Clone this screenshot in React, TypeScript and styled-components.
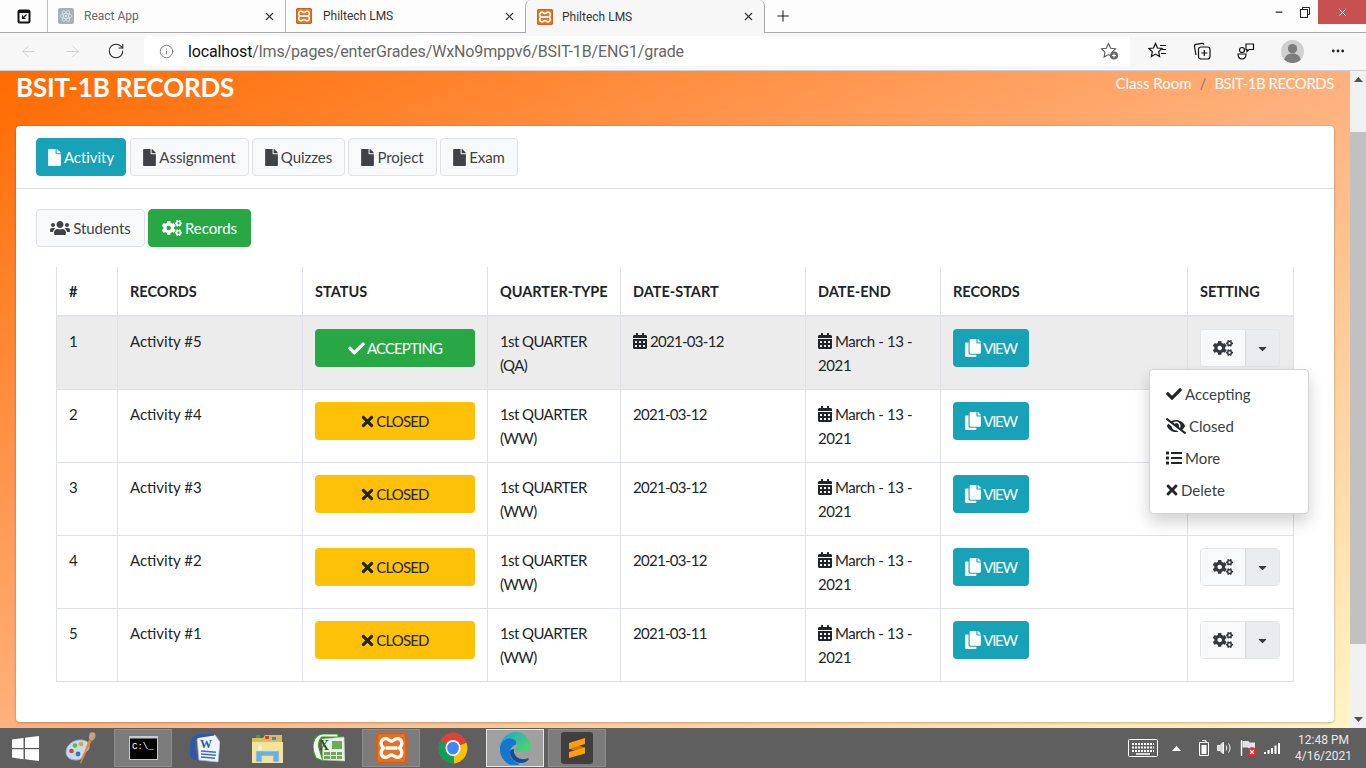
import * as React from 'react'
import styled, { createGlobalStyle } from 'styled-components'
import { ArrowLeft, ArrowRight, Info, Minus, MoreHorizontal, Plus, RotateCw, X } from 'lucide-react'
import {
  FaCalendarAlt,
  FaCaretDown,
  FaCheck,
  FaCogs,
  FaCopy,
  FaEyeSlash,
  FaFile,
  FaList,
  FaTimes,
  FaUsers
} from 'react-icons/fa'

// ______________________________________________________
//
// @ Data

type Row = { no: number; name: string; accepting: boolean; quarter: string; start: string; startIcon: boolean }

const rows: Row[] = [
  { no: 1, name: 'Activity #5', accepting: true, quarter: '(QA)', start: '2021-03-12', startIcon: true },
  { no: 2, name: 'Activity #4', accepting: false, quarter: '(WW)', start: '2021-03-12', startIcon: false },
  { no: 3, name: 'Activity #3', accepting: false, quarter: '(WW)', start: '2021-03-12', startIcon: false },
  { no: 4, name: 'Activity #2', accepting: false, quarter: '(WW)', start: '2021-03-12', startIcon: false },
  { no: 5, name: 'Activity #1', accepting: false, quarter: '(WW)', start: '2021-03-11', startIcon: false }
]

const columns = [61, 185, 185, 133, 185, 135, 247, 106]
const headers = ['#', 'RECORDS', 'STATUS', 'QUARTER-TYPE', 'DATE-START', 'DATE-END', 'RECORDS', 'SETTING']
const tabs = ['Activity', 'Assignment', 'Quizzes', 'Project', 'Exam']
const tabWidths = [90, 119, 93, 89, 78]

// ______________________________________________________
//
// @ Styled: browser

const Global = createGlobalStyle`
  html, body { margin: 0; padding: 0; height: 100%; overflow: hidden; }
  body { font-family: "Lato", "Liberation Sans", sans-serif; color: #212529; }
  * { box-sizing: border-box; }
`

const Screen = styled.div`
  display: flex;
  flex-direction: column;
  width: 1366px;
  height: 768px;
  overflow: hidden;
`

const TabStrip = styled.div`
  display: flex;
  height: 33px;
  background: #fdfdfd;
  border-bottom: 1px solid #a9a9a9;
  flex: none;
`

const StripAction = styled.div`
  display: flex;
  align-items: center;
  justify-content: center;
  width: 47px;
  height: 32px;
`

const BrowserTab = styled.div<{ $active?: boolean; $width: number }>`
  display: flex;
  align-items: center;
  width: ${p => p.$width}px;
  height: ${p => (p.$active ? 33 : 32)}px;
  padding: 0 9px 0 ${p => (p.$active ? 11 : 10)}px;
  font: 12px "Roboto", "Noto Sans", sans-serif;
  color: #333;
  border-left: 1px solid ${p => (p.$active ? '#a9a9a9' : '#bdbdbd')};
  border-right: ${p => (p.$active ? '1px solid #a9a9a9' : 'none')};
  border-radius: ${p => (p.$active ? '6px 6px 0 0' : '0')};
  background: ${p => (p.$active ? '#f7f7f7' : 'transparent')};
  svg { flex: none; }
`

const TabTitle = styled.span<{ $muted?: boolean; $shift: number }>`
  flex: 1;
  margin-left: ${p => p.$shift}px;
  color: ${p => (p.$muted ? '#666' : '#333')};
`

const NewTab = styled.div`
  display: flex;
  align-items: center;
  width: 36px;
  padding-left: 9px;
  height: 32px;
`

const WindowControls = styled.div`
  display: flex;
  margin-left: auto;
  height: 24px;
`

const WindowButton = styled.div<{ $close?: boolean; $width: number }>`
  display: flex;
  align-items: center;
  justify-content: center;
  width: ${p => p.$width}px;
  background: ${p => (p.$close ? '#c75050' : 'transparent')};
  color: ${p => (p.$close ? '#fff' : '#222')};
`

const AddressRow = styled.div`
  display: flex;
  align-items: center;
  height: 38px;
  flex: none;
  padding-bottom: 1px;
  background: #f7f7f7;
  border-bottom: 1px solid #d0d0d0;
`

const NavIcon = styled.div<{ $width: number }>`
  display: flex;
  align-items: center;
  justify-content: center;
  width: ${p => p.$width}px;
  flex: none;
  color: #222;
`

const AddressBar = styled.div`
  display: flex;
  align-items: center;
  width: 986px;
  height: 30px;
  padding: 0 10px 0 15px;
  background: #fff;
  border-radius: 4px;
  font: 16px "Roboto", "Noto Sans", sans-serif;
  letter-spacing: -0.13px;
  color: #666;
  span { margin-left: 14px; flex: 1; white-space: nowrap; }
  b { font-weight: 400; color: #111; }
`

// ______________________________________________________
//
// @ Styled: page

const Viewport = styled.div`
  display: flex;
  flex: 1;
  min-height: 0;
`

const Page = styled.div`
  flex: 1;
  padding: 0 16px;
  overflow: hidden;
  background: linear-gradient(to bottom right, #ff6a00 0%, #ffb07c 50%, #fff6c4 100%);
`

const PageHead = styled.div`
  display: flex;
  justify-content: space-between;
  align-items: flex-start;
  height: 55px;
`

const Title = styled.h1`
  margin: 0;
  font-size: 26px;
  line-height: 32px;
  font-weight: 700;
  letter-spacing: -0.2px;
  color: #fff;
`

const Crumbs = styled.div`
  display: flex;
  gap: 8px;
  font-size: 15px;
  line-height: 24px;
  color: #fff;
  i { font-style: normal; color: #7d7d7d; }
`

const CrumbCurrent = styled.span`
  letter-spacing: -0.45px;
`

const Card = styled.div`
  background: #fff;
  border-radius: 4px;
  height: 596px;
  box-shadow: 0 0 2px rgba(0, 0, 0, 0.15), 0 1px 3px rgba(0, 0, 0, 0.2);
`

const CardHead = styled.div`
  display: flex;
  gap: 3px;
  height: 63px;
  padding: 12px 20px;
  border-bottom: 1px solid #dfdfdf;
  > :first-child { margin-right: 1px; }
`

const CardBody = styled.div`
  padding: 20px;
`

const ButtonRow = styled.div`
  display: flex;
  gap: 3px;
  margin-bottom: 20px;
`

const Button = styled.div<{ $kind: 'info' | 'success' | 'light'; $width: number }>`
  display: flex;
  align-items: center;
  justify-content: center;
  gap: 3px;
  width: ${p => p.$width}px;
  height: 38px;
  border-radius: 4px;
  font-size: 15px;
  letter-spacing: -0.05px;
  border: 1px solid ${p => ({ info: '#17a2b8', success: '#28a745', light: '#dfe1e4' })[p.$kind]};
  background: ${p => ({ info: '#17a2b8', success: '#28a745', light: '#f8f9fa' })[p.$kind]};
  color: ${p => (p.$kind === 'light' ? '#3f4347' : '#fff')};
  svg { flex: none; }
`

const FileIcon = styled(FaFile)`
  margin: 0 -2px;
`

const Table = styled.table`
  table-layout: fixed;
  width: 1237px;
  margin-left: 20px;
  border-collapse: collapse;
`

const Th = styled.th`
  height: 49px;
  padding: 13px 12px 11px;
  text-align: left;
  vertical-align: middle;
  font-size: 14.5px;
  line-height: 24px;
  font-weight: 700;
  white-space: nowrap;
  color: #212529;
  border-left: 1px solid #dee2e6;
  border-right: 1px solid #dee2e6;
  border-bottom: 2px solid #dee2e6;
`

const Tr = styled.tr<{ $hover: boolean }>`
  background: ${p => (p.$hover ? '#ececec' : 'transparent')};
`

const Td = styled.td`
  position: relative;
  height: 73px;
  padding: 12px;
  vertical-align: top;
  font-size: 15px;
  line-height: 24px;
  color: #212529;
  border: 1px solid #dee2e6;
`

const Tight = styled.span<{ $spacing: number }>`
  letter-spacing: ${p => p.$spacing}px;
`

const CalendarIcon = styled(FaCalendarAlt)`
  vertical-align: -2px;
  margin: 0 2px 0 -1px;
`

const StatusButton = styled.div<{ $accepting: boolean }>`
  display: flex;
  align-items: center;
  justify-content: center;
  gap: 2px;
  width: 160px;
  height: 38px;
  border-radius: 4px;
  font-size: 15px;
  letter-spacing: -0.85px;
  background: ${p => (p.$accepting ? '#28a745' : '#ffc107')};
  color: ${p => (p.$accepting ? '#fff' : '#212529')};
`

const TimesIcon = styled(FaTimes)`
  margin: 0 -2px;
`

const ViewButton = styled.div`
  display: flex;
  align-items: center;
  justify-content: center;
  gap: 2px;
  width: 76px;
  height: 38px;
  border-radius: 4px;
  font-size: 15px;
  letter-spacing: -1.3px;
  background: #17a2b8;
  color: #fff;
`

const CopyIcon = styled(FaCopy)`
  margin: 0 -1px;
`

const SettingGroup = styled.div`
  display: flex;
  width: 80px;
  height: 38px;
  border: 1px solid #e2e4e7;
  border-radius: 4px;
  overflow: hidden;
  color: #343a40;
`

const SettingPart = styled.div<{ $toggle?: boolean }>`
  display: flex;
  align-items: center;
  justify-content: center;
  flex: ${p => (p.$toggle ? '0 0 34px' : '1')};
  background: ${p => (p.$toggle ? '#e9ecef' : '#f8f9fa')};
  border-left: ${p => (p.$toggle ? '1px solid #d8dbdf' : 'none')};
`

const Menu = styled.div`
  position: absolute;
  z-index: 2;
  top: 52px;
  left: -39px;
  width: 160px;
  height: 145px;
  padding: 8px 0;
  background: #fff;
  border: 1px solid #d2d4d7;
  border-radius: 4px;
  box-shadow: 0 8px 16px rgba(0, 0, 0, 0.18);
`

const MenuItem = styled.div`
  display: flex;
  align-items: center;
  gap: 3px;
  height: 32px;
  padding: 0 16px;
  font-size: 15px;
  color: #3a3f44;
  svg { flex: none; color: #212529; }
`

const Scrollbar = styled.div`
  display: flex;
  flex-direction: column;
  align-items: center;
  width: 16px;
  flex: none;
  background: #f1f1f1;
`

const ScrollArrow = styled.div`
  display: flex;
  align-items: center;
  justify-content: center;
  width: 16px;
  height: 17px;
  flex: none;
`

const ScrollTrack = styled.div`
  flex: 1;
  width: 100%;
  padding-top: 44px;
  padding-bottom: 67px;
  &::before {
    content: '';
    display: block;
    height: 100%;
    background: #c1c1c1;
  }
`

// ______________________________________________________
//
// @ Styled: taskbar

const Taskbar = styled.div`
  display: flex;
  align-items: center;
  height: 40px;
  flex: none;
  background: #5f5f5f;
`

const Start = styled.div`
  display: flex;
  align-items: center;
  justify-content: center;
  width: 50px;
  padding-left: 1px;
`

const Slot = styled.div<{ $state?: 'open' | 'active' }>`
  display: flex;
  align-items: center;
  justify-content: center;
  width: 58px;
  height: 38px;
  margin: 0 2px;
  border: 1px solid ${p => (p.$state === 'active' ? '#e6e6e6' : p.$state === 'open' ? '#8d8d8d' : 'transparent')};
  background: ${p => (p.$state === 'active' ? '#a0a0a0' : p.$state === 'open' ? '#7b7b7b' : 'transparent')};
`

const Tray = styled.div`
  display: flex;
  align-items: center;
  margin-left: auto;
  height: 100%;
`

const TrayIcon = styled.div<{ $width: number }>`
  display: flex;
  align-items: center;
  justify-content: center;
  width: ${p => p.$width}px;
`

const Clock = styled.div`
  width: 85px;
  text-align: center;
  font: 12px/16px "Roboto", "Liberation Sans", sans-serif;
  color: #e8e8e8;
`

// ______________________________________________________
//
// @ Drawings

const Xampp: React.FC<{ width: number; height: number }> = ({ width, height }) => (
  <svg width={width} height={height} viewBox="0 0 16 16">
    <rect width="16" height="16" rx="1.800" fill="#e8701f" />
    <rect x=".5" y=".5" width="15" height="15" rx="1.500" fill="none" stroke="#c85a12" strokeWidth=".6" />
    <path
      d="M5 3.200c1.500 0 2 1.300 3 1.300s1.500-1.300 3-1.300c2.600 0 3.200 3.200 1 4.800 2.200 1.600 1.600 4.800-1 4.800-1.500 0-2-1.300-3-1.300s-1.500 1.300-3 1.300c-2.600 0-3.200-3.200-1-4.800-2.200-1.600-1.600-4.800 1-4.800Z"
      fill="none"
      stroke="#fff"
      strokeWidth="1.700"
    />
    <rect x="5" y="7.100" width="6" height="1.800" fill="#fff" />
  </svg>
)

const ReactFavicon = () => (
  <svg width="16" height="16" viewBox="0 0 16 16">
    <rect width="16" height="16" rx="2" fill="#a9b0b3" />
    <g fill="none" stroke="#d7e6ea" strokeWidth="0.800">
      <ellipse cx="8" cy="8" rx="6" ry="2.400" />
      <ellipse cx="8" cy="8" rx="6" ry="2.400" transform="rotate(60 8 8)" />
      <ellipse cx="8" cy="8" rx="6" ry="2.400" transform="rotate(120 8 8)" />
    </g>
    <circle cx="8" cy="8" r="1.200" fill="#d7e6ea" />
  </svg>
)

const TabActions = () => (
  <svg width="16" height="16" viewBox="0 0 16 16">
    <rect x="1.500" y="1.500" width="13" height="14" rx="2" fill="#111" />
    <rect x="3.500" y="5" width="9" height="8.500" fill="#fff" />
    <path d="M10.500 6.500 6.500 10.500M6.500 7.500v3h3" fill="none" stroke="#111" strokeWidth="1.200" />
  </svg>
)

const AddFavourite = () => (
  <svg width="20" height="20" viewBox="0 0 20 20">
    <path d="M8.500 2.500 10.700 7.200 15.500 7.800 12 11.200 12.900 16 8.500 13.600 4.100 16 5 11.200 1.500 7.800 6.300 7.200Z" fill="none" stroke="#555" strokeWidth="1.100" />
    <circle cx="14" cy="14.500" r="4" fill="#666" />
    <path d="M14 12.500v4M12 14.500h4" stroke="#fff" strokeWidth="1.100" />
  </svg>
)

const Favourites = () => (
  <svg width="20" height="20" viewBox="0 0 20 20">
    <path d="M7.500 2.500 9.500 7 14 7.500 10.700 10.600 11.600 15.500 7.500 13.100 3.400 15.500 4.300 10.600 1 7.500 5.500 7Z" fill="none" stroke="#111" strokeWidth="1.200" />
    <path d="M12 4.500h6M14 8.500h4M13 12.500h5" stroke="#111" strokeWidth="1.200" />
  </svg>
)

const Collections = () => (
  <svg width="20" height="20" viewBox="0 0 20 20" fill="none" stroke="#111" strokeWidth="1.200">
    <path d="M4 14 2.500 5.500c-.2-1.200.4-2 1.500-2.200l6-1c1-.1 1.700.3 2 1.200" />
    <rect x="6.500" y="6" width="11.500" height="12" rx="2.500" fill="#f7f7f7" />
    <path d="M12.300 9v6M9.300 12h6" />
  </svg>
)

const Feedback = () => (
  <svg width="20" height="20" viewBox="0 0 20 20" fill="none" stroke="#111" strokeWidth="1.200">
    <circle cx="6" cy="9" r="2.500" />
    <path d="M2 13h8c0 3-1.500 5-4 5s-4-2-4-5Z" />
    <path d="M10 3h7.500v5.500H13l-2 2V8.500h-1Z" />
  </svg>
)

const Avatar = () => (
  <svg width="23" height="23" viewBox="0 0 24 24">
    <circle cx="12" cy="12" r="12" fill="#cfcfcf" />
    <circle cx="12" cy="9" r="4.800" fill="#7d7d7d" />
    <path d="M3.500 20.500c1-5 4.500-6.500 8.500-6.500s7.500 1.500 8.500 6.500A12 12 0 0 1 3.500 20.500Z" fill="#7d7d7d" />
  </svg>
)

const WindowsLogo = () => (
  <svg width="27" height="25" viewBox="0 0 27 25" fill="#fff">
    <path d="M0 3.600 11.500 2v10H0ZM13 1.800 27 0v12H13ZM0 13.200h11.500v10L0 21.600ZM13 13.200h14V25l-14-1.800Z" />
  </svg>
)

const Paint = () => (
  <svg width="32" height="32" viewBox="0 0 32 32">
    <path d="M1 20C1 13 9 7 17 8c6 .7 8 4 7 8-1 4-5 4-6 7-1 3-2 5-7 5-6 0-10-3-10-8Z" fill="#c6dbee" stroke="#8fb2d2" />
    <circle cx="6.500" cy="19" r="2.300" fill="#d3452f" />
    <circle cx="10" cy="13.500" r="2.300" fill="#6eb33f" />
    <circle cx="16" cy="12" r="2.300" fill="#e3a72b" />
    <circle cx="13" cy="22" r="2.400" fill="#3f74a8" />
    <path d="M24 7.500 26.500 9 16 31.500l-1-.6Z" fill="#e98a24" />
    <path d="M25 1c3-1.500 6-.5 5.500 3-.3 2-2 4-3.500 5l-3-2c0-2 0-4 1-6Z" fill="#c9a27a" />
  </svg>
)

const Terminal = () => (
  <svg width="29" height="24" viewBox="0 0 29 24">
    <rect width="29" height="24" fill="#c9c9c9" />
    <rect x="1" y="2.500" width="27" height="20.500" fill="#000" />
    <text x="3" y="13" fontFamily="Liberation Mono, monospace" fontSize="9" fill="#fff">C:\_</text>
  </svg>
)

const Word = () => (
  <svg width="30" height="29" viewBox="0 0 30 29">
    <path d="M7 3 25 1l5 7-2 20-19-2Z" fill="#f1f5fb" stroke="#a9bcd6" strokeWidth=".8" />
    <path d="M8 0h16v1.500L8 4C5 6 5 10 5 14l3 13-7-3C0 18-1 12 1 7c1-4 4-6 7-7Z" fill="#2a5ba8" />
    <text x="10" y="14" fontFamily="Liberation Serif, serif" fontWeight="700" fontSize="12" fill="#2a5ba8">W</text>
    <path d="M11 17l15 1.200M11 20l15 1.200M11 23l14 1.200" stroke="#3e70b8" strokeWidth="1.500" />
  </svg>
)

const Explorer = () => (
  <svg width="31" height="29" viewBox="0 0 31 29">
    <path d="M0 4h11l2-3h17v28H0Z" fill="#d9bb62" />
    <rect x="4" y="1" width="4" height="3" fill="#3aa33a" />
    <rect x="13" y="2" width="4" height="3" fill="#d8402a" />
    <rect x="20" y="3" width="4" height="3" fill="#2f8fd0" />
    <path d="M0 8h31v21H0Z" fill="#f5e39a" />
    <path d="M4 28V17h23v11h-6v-6H10v6Z" fill="#6faedb" stroke="#b7dcf3" strokeWidth=".7" />
    <circle cx="8" cy="14" r="2" fill="#fff" opacity=".9" />
  </svg>
)

const Excel = () => (
  <svg width="32" height="29" viewBox="0 0 32 29">
    <path d="M10 0h15v3H9C6 6 5 10 6 14l4 13-7-3C0 18-1 12 1 7c1-4 5-7 9-7Z" fill="#f1f7ec" stroke="#3f9a32" strokeWidth="1.200" />
    <path d="M9 5 31 3l1 24-22-1Z" fill="#e9f1e3" stroke="#b5c9ac" strokeWidth=".6" />
    <text x="6" y="16" fontFamily="Liberation Serif, serif" fontWeight="700" fontSize="14" fill="#1f5a26">X</text>
    <path d="M19 7h10v8H19ZM11 18h6v3h-6ZM18 18h5v3h-5ZM24 18h5v3h-5ZM11 22h6v3h-6ZM18 22h5v3h-5ZM24 22h5v3h-5Z" fill="#6fa75c" />
  </svg>
)

const Chrome = () => (
  <svg width="30" height="32" viewBox="0 0 32 34">
    <ellipse cx="16" cy="17" rx="15.500" ry="16.500" fill="#db4437" />
    <path d="M16 17 30.500 11.500A15.500 16.500 0 0 1 17 33.500Z" fill="#f4c20d" />
    <path d="M16 17 17 33.500A15.500 16.500 0 0 1 2.500 9Z" fill="#0f9d58" />
    <ellipse cx="16" cy="17" rx="8" ry="8.500" fill="#fff" />
    <ellipse cx="16" cy="17" rx="6.300" ry="6.800" fill="#4285f4" />
  </svg>
)

const Edge = () => (
  <svg width="31" height="33" viewBox="0 0 31 33">
    <defs>
      <linearGradient id="edgeTop" x1="0" y1="0" x2="1" y2="0.600">
        <stop offset="0" stopColor="#1f9fd8" />
        <stop offset="1" stopColor="#4bd26e" />
      </linearGradient>
    </defs>
    <path d="M0 15C1 6 8 0 16 0c8 0 15 7 15 15 0 3-2 5-5 5H15c-1.500 0-1-2 .5-3 2-1.500 2.500-3 1.500-5C15 8 9 6 5 9c-2.500 2-4 4-5 6Z" fill="url(#edgeTop)" />
    <path d="M0 15c1-5 5-9 10-8.500 5 .5 7 3 6 6-3 1-6 3.500-6 8 0 5 4 10 10 11.500-2 1-4 1.500-6 1.500C6 33-1 25 0 15Z" fill="#1277cf" />
    <path d="M10 20c0 6 5 11 11 11 3.500 0 6-1.500 8-4l-1-.8c-4 1.800-9 1-12-2-2-2-2.500-4.700-2-7.200-2 0-4 1-4 3Z" fill="#0c4f9e" />
  </svg>
)

const Sublime = () => (
  <svg width="32" height="32" viewBox="0 0 32 32">
    <rect width="32" height="32" rx="3" fill="#3f3f3f" />
    <path d="M8 11 24 15.500v6L8 17Z" fill="#c57a0b" />
    <path d="M24 6v6L8 17v-6ZM24 15.500v6L8 26v-6Z" fill="#ff9d0a" />
  </svg>
)

const Keyboard = () => (
  <svg width="30" height="18" viewBox="0 0 30 18">
    <rect x=".5" y=".5" width="29" height="17" rx="1" fill="#5f5f5f" stroke="#fff" />
    <path d="M4 5h22M4 8.500h22M4 12h22" stroke="#fff" strokeWidth="2" strokeDasharray="2 1" />
    <path d="M8 15h14" stroke="#fff" strokeWidth="1.500" />
  </svg>
)

const TrayCaret = () => (
  <svg width="9" height="5" viewBox="0 0 9 5"><path d="M4.500 0 9 5H0Z" fill="#fff" /></svg>
)

const Battery = () => (
  <svg width="10" height="16" viewBox="0 0 10 16" fill="none" stroke="#fff">
    <path d="M3 .5h4v2M.5 2.500h9v13h-9Z" />
    <rect x="2.500" y="5" width="5" height="9" fill="#fff" stroke="none" />
  </svg>
)

const Speaker = () => (
  <svg width="15" height="14" viewBox="0 0 15 14" fill="none" stroke="#fff">
    <path d="M.5 4.500H3L6.500 1v12L3 9.500H.5Z" fill="#d8d8d8" />
    <path d="M9 4.500c1 1.500 1 3.500 0 5M11.500 2.500c2 3 2 6 0 9" />
  </svg>
)

const Flag = () => (
  <svg width="18" height="19" viewBox="0 0 18 19">
    <path d="M1.500 1v16" stroke="#fff" strokeWidth="1.400" />
    <path d="M2.500 2h6l1 1.500H15V10H9L8 8.500H2.500Z" fill="#e4e4e4" />
    <circle cx="12" cy="13" r="4.800" fill="#e0262a" />
    <path d="M10 11l4 4M14 11l-4 4" stroke="#fff" strokeWidth="1.300" />
  </svg>
)

const Signal = () => (
  <svg width="16" height="11" viewBox="0 0 16 11" fill="#fff">
    <rect x="0" y="9" width="2" height="2" />
    <rect x="3.500" y="7" width="2" height="4" />
    <rect x="7" y="5" width="2" height="6" />
    <rect x="10.500" y="2.500" width="2" height="8.500" />
    <rect x="14" y="0" width="2" height="11" />
  </svg>
)

// ______________________________________________________
//
// @ View

const App: React.FC = () => (
  <Screen>
    <Global />
    <TabStrip>
      <StripAction><TabActions /></StripAction>
      <BrowserTab $width={238}>
        <ReactFavicon />
        <TabTitle $muted $shift={10}>React App</TabTitle>
        <X size={13} strokeWidth={2} />
      </BrowserTab>
      <BrowserTab $width={240}>
        <Xampp width={16} height={16} />
        <TabTitle $shift={11}>Philtech LMS</TabTitle>
        <X size={13} strokeWidth={2} />
      </BrowserTab>
      <BrowserTab $active $width={240}>
        <Xampp width={16} height={16} />
        <TabTitle $shift={9}>Philtech LMS</TabTitle>
        <X size={13} strokeWidth={2} />
      </BrowserTab>
      <NewTab><Plus size={18} strokeWidth={1.3} color="#111" /></NewTab>
      <WindowControls>
        <WindowButton $width={26}><Minus size={10} strokeWidth={3} /></WindowButton>
        <WindowButton $width={26}>
          <svg width="10" height="11" viewBox="0 0 10 11" fill="none" stroke="#222">
            <path d="M2.500 2.500V.5h7v7H7.500" />
            <rect x=".5" y="2.500" width="7" height="8" />
          </svg>
        </WindowButton>
        <WindowButton $close $width={48}><X size={11} strokeWidth={2} /></WindowButton>
      </WindowControls>
    </TabStrip>
    <AddressRow>
      <NavIcon $width={56}><ArrowLeft size={19} strokeWidth={1} color="#c4c4c4" /></NavIcon>
      <NavIcon $width={32}><ArrowRight size={19} strokeWidth={1} color="#c4c4c4" /></NavIcon>
      <NavIcon $width={56}><RotateCw size={18} strokeWidth={1.400} /></NavIcon>
      <AddressBar>
        <Info size={15} strokeWidth={1.200} color="#555" />
        <span><b>localhost</b>/lms/pages/enterGrades/WxNo9mppv6/BSIT-1B/ENG1/grade</span>
        <AddFavourite />
      </AddressBar>
      <NavIcon $width={56}><Favourites /></NavIcon>
      <NavIcon $width={32}><Collections /></NavIcon>
      <NavIcon $width={56}><Feedback /></NavIcon>
      <NavIcon $width={36}><Avatar /></NavIcon>
      <NavIcon $width={56}><MoreHorizontal size={16} strokeWidth={2.200} /></NavIcon>
    </AddressRow>

    <Viewport>
      <Page>
        <PageHead>
          <Title>BSIT-1B RECORDS</Title>
          <Crumbs>Class Room <i>/</i> <CrumbCurrent>BSIT-1B RECORDS</CrumbCurrent></Crumbs>
        </PageHead>
        <Card>
          <CardHead>
            {tabs.map((t, i) => (
              <Button key={t} $kind={i === 0 ? 'info' : 'light'} $width={tabWidths[i]}>
                <FileIcon size={17} />
                {t}
              </Button>
            ))}
          </CardHead>
          <CardBody>
            <ButtonRow>
              <Button $kind="light" $width={109}><FaUsers size={20} />Students</Button>
              <Button $kind="success" $width={103}><FaCogs size={20} />Records</Button>
            </ButtonRow>
            <Table>
              <colgroup>
                {columns.map((w, i) => <col key={i} style={{ width: w }} />)}
              </colgroup>
              <thead>
                <tr>
                  {headers.map((h, i) => <Th key={i}>{h}</Th>)}
                </tr>
              </thead>
              <tbody>
                {rows.map(r => (
                  <Tr key={r.no} $hover={r.no === 1}>
                    <Td>{r.no}</Td>
                    <Td>{r.name}</Td>
                    <Td>
                      <StatusButton $accepting={r.accepting}>
                        {r.accepting ? <FaCheck size={17} /> : <TimesIcon size={17} />}
                        {r.accepting ? 'ACCEPTING' : 'CLOSED'}
                      </StatusButton>
                    </Td>
                    <Td><Tight $spacing={-0.6}>1st QUARTER<br />{r.quarter}</Tight></Td>
                    <Td>
                      {r.startIcon && <CalendarIcon size={16} />}
                      <Tight $spacing={-0.7}>{r.start}</Tight>
                    </Td>
                    <Td>
                      <CalendarIcon size={16} />
                      <Tight $spacing={-0.4}>March - 13 - 2021</Tight>
                    </Td>
                    <Td>
                      <ViewButton><CopyIcon size={18} />VIEW</ViewButton>
                    </Td>
                    <Td>
                      <SettingGroup>
                        <SettingPart><FaCogs size={20} /></SettingPart>
                        <SettingPart $toggle><FaCaretDown size={13} /></SettingPart>
                      </SettingGroup>
                      {r.no === 1 && (
                        <Menu>
                          <MenuItem><FaCheck size={16} />Accepting</MenuItem>
                          <MenuItem><FaEyeSlash size={20} />Closed</MenuItem>
                          <MenuItem><FaList size={16} />More</MenuItem>
                          <MenuItem><TimesIcon size={16} />Delete</MenuItem>
                        </Menu>
                      )}
                    </Td>
                  </Tr>
                ))}
              </tbody>
            </Table>
          </CardBody>
        </Card>
      </Page>
      <Scrollbar>
        <ScrollArrow>
          <svg width="9" height="5" viewBox="0 0 9 5"><path d="M4.500 0 9 5H0Z" fill="#505050" /></svg>
        </ScrollArrow>
        <ScrollTrack />
        <ScrollArrow>
          <svg width="9" height="5" viewBox="0 0 9 5"><path d="M4.500 5 9 0H0Z" fill="#505050" /></svg>
        </ScrollArrow>
      </Scrollbar>
    </Viewport>

    <Taskbar>
      <Start><WindowsLogo /></Start>
      <Slot><Paint /></Slot>
      <Slot $state="open"><Terminal /></Slot>
      <Slot><Word /></Slot>
      <Slot><Explorer /></Slot>
      <Slot><Excel /></Slot>
      <Slot $state="open"><Xampp width={31} height={32} /></Slot>
      <Slot><Chrome /></Slot>
      <Slot $state="active"><Edge /></Slot>
      <Slot $state="open"><Sublime /></Slot>
      <Tray>
        <TrayIcon $width={32}><Keyboard /></TrayIcon>
        <TrayIcon $width={34}><TrayCaret /></TrayIcon>
        <TrayIcon $width={21}><Battery /></TrayIcon>
        <TrayIcon $width={20}><Speaker /></TrayIcon>
        <TrayIcon $width={29}><Flag /></TrayIcon>
        <TrayIcon $width={18}><Signal /></TrayIcon>
        <Clock>12:48 PM<br />4/16/2021</Clock>
      </Tray>
    </Taskbar>
  </Screen>
)

export default App
